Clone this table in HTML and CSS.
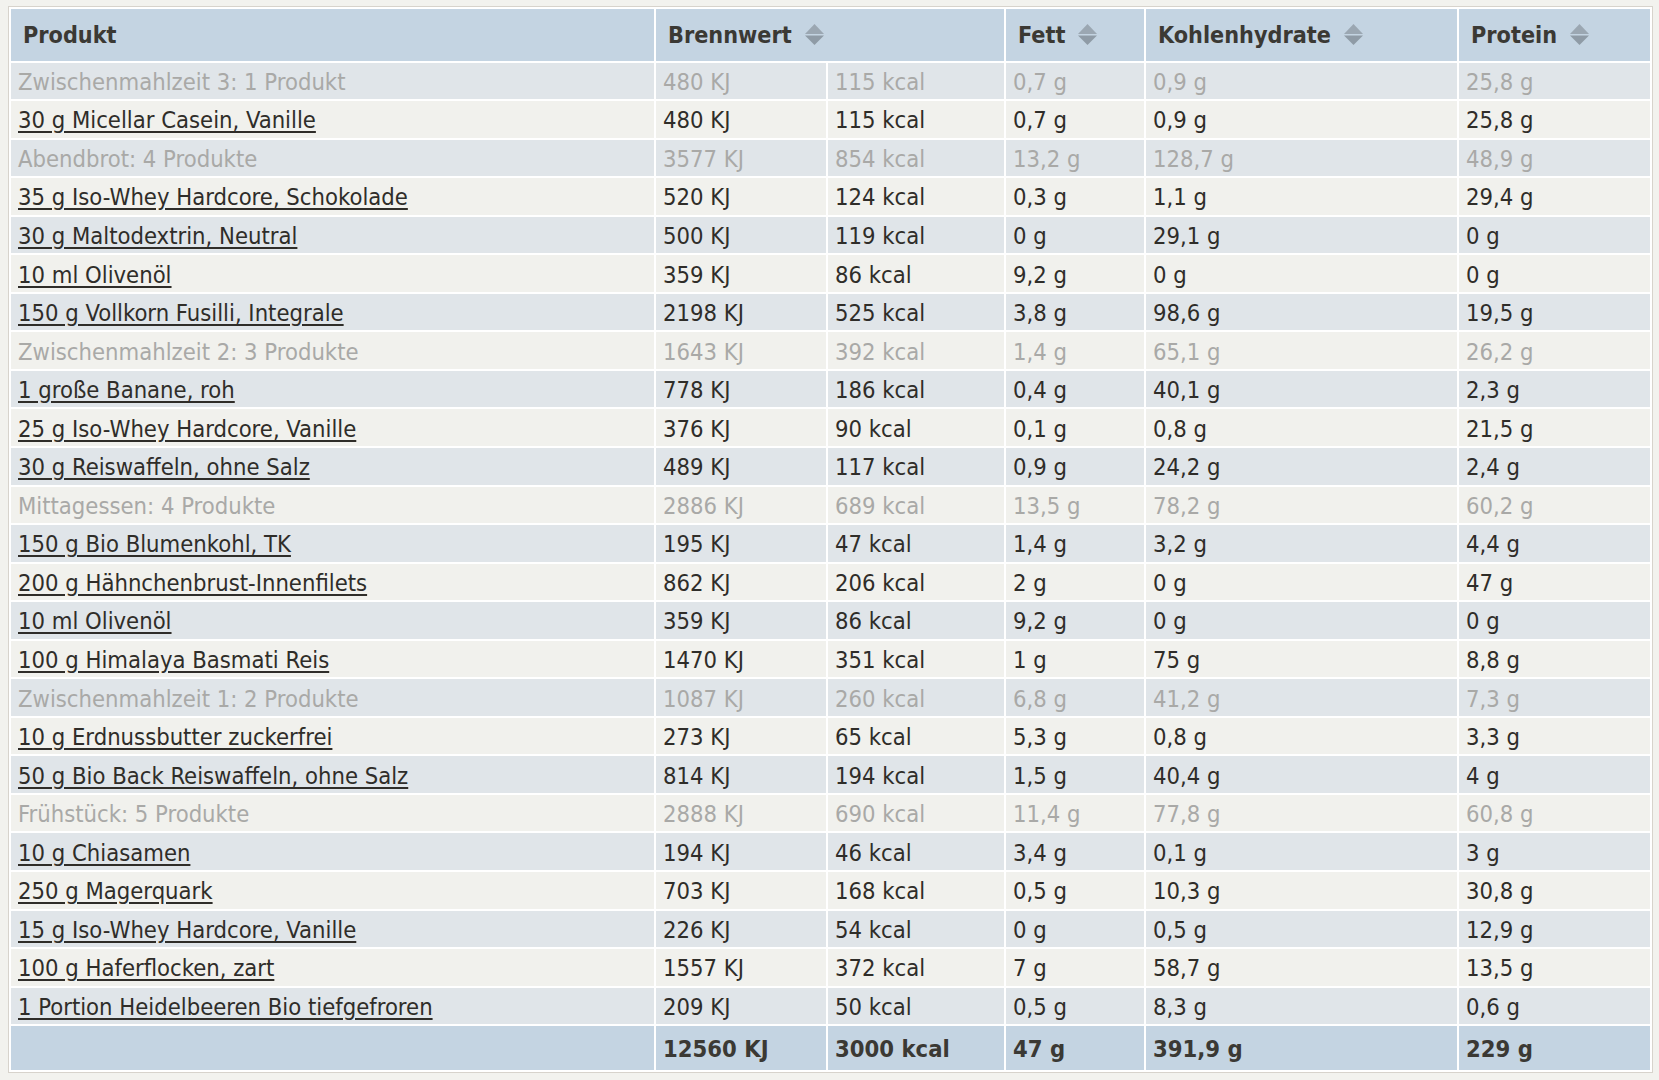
FILE: index.html
```html
<!DOCTYPE html>
<html lang="de">
<head>
<meta charset="utf-8">
<title>Tagesübersicht</title>
<link rel="stylesheet" href="styles.css">
</head>
<body>
<div class="wrap">
<table class="nutri">
<colgroup>
<col class="c-prod"><col class="c-kj"><col class="c-kcal"><col class="c-fett"><col class="c-kh"><col class="c-prot">
</colgroup>
<thead>
<tr>
<th>Produkt</th>
<th colspan="2"><span class="hd">Brennwert<svg class="sort" viewBox="0 0 19 21" width="19" height="21"><polygon points="0,10 9.5,0 19,10" fill="#9ba7b2"/><polygon points="0,11.5 19,11.5 9.5,21" fill="#8f9ba6"/></svg></span></th>
<th><span class="hd">Fett<svg class="sort" viewBox="0 0 19 21" width="19" height="21"><polygon points="0,10 9.5,0 19,10" fill="#9ba7b2"/><polygon points="0,11.5 19,11.5 9.5,21" fill="#8f9ba6"/></svg></span></th>
<th><span class="hd">Kohlenhydrate<svg class="sort" viewBox="0 0 19 21" width="19" height="21"><polygon points="0,10 9.5,0 19,10" fill="#9ba7b2"/><polygon points="0,11.5 19,11.5 9.5,21" fill="#8f9ba6"/></svg></span></th>
<th><span class="hd">Protein<svg class="sort" viewBox="0 0 19 21" width="19" height="21"><polygon points="0,10 9.5,0 19,10" fill="#9ba7b2"/><polygon points="0,11.5 19,11.5 9.5,21" fill="#8f9ba6"/></svg></span></th>
</tr>
</thead>
<tbody>
<tr class="grp"><td>Zwischenmahlzeit 3: 1 Produkt</td><td>480 KJ</td><td>115 kcal</td><td>0,7 g</td><td>0,9 g</td><td>25,8 g</td></tr>
<tr><td><a href="#">30 g Micellar Casein, Vanille</a></td><td>480 KJ</td><td>115 kcal</td><td>0,7 g</td><td>0,9 g</td><td>25,8 g</td></tr>
<tr class="grp"><td>Abendbrot: 4 Produkte</td><td>3577 KJ</td><td>854 kcal</td><td>13,2 g</td><td>128,7 g</td><td>48,9 g</td></tr>
<tr><td><a href="#">35 g Iso-Whey Hardcore, Schokolade</a></td><td>520 KJ</td><td>124 kcal</td><td>0,3 g</td><td>1,1 g</td><td>29,4 g</td></tr>
<tr><td><a href="#">30 g Maltodextrin, Neutral</a></td><td>500 KJ</td><td>119 kcal</td><td>0 g</td><td>29,1 g</td><td>0 g</td></tr>
<tr><td><a href="#">10 ml Olivenöl</a></td><td>359 KJ</td><td>86 kcal</td><td>9,2 g</td><td>0 g</td><td>0 g</td></tr>
<tr><td><a href="#">150 g Vollkorn Fusilli, Integrale</a></td><td>2198 KJ</td><td>525 kcal</td><td>3,8 g</td><td>98,6 g</td><td>19,5 g</td></tr>
<tr class="grp"><td>Zwischenmahlzeit 2: 3 Produkte</td><td>1643 KJ</td><td>392 kcal</td><td>1,4 g</td><td>65,1 g</td><td>26,2 g</td></tr>
<tr><td><a href="#">1 große Banane, roh</a></td><td>778 KJ</td><td>186 kcal</td><td>0,4 g</td><td>40,1 g</td><td>2,3 g</td></tr>
<tr><td><a href="#">25 g Iso-Whey Hardcore, Vanille</a></td><td>376 KJ</td><td>90 kcal</td><td>0,1 g</td><td>0,8 g</td><td>21,5 g</td></tr>
<tr><td><a href="#">30 g Reiswaffeln, ohne Salz</a></td><td>489 KJ</td><td>117 kcal</td><td>0,9 g</td><td>24,2 g</td><td>2,4 g</td></tr>
<tr class="grp"><td>Mittagessen: 4 Produkte</td><td>2886 KJ</td><td>689 kcal</td><td>13,5 g</td><td>78,2 g</td><td>60,2 g</td></tr>
<tr><td><a href="#">150 g Bio Blumenkohl, TK</a></td><td>195 KJ</td><td>47 kcal</td><td>1,4 g</td><td>3,2 g</td><td>4,4 g</td></tr>
<tr><td><a href="#">200 g Hähnchenbrust-Innenfilets</a></td><td>862 KJ</td><td>206 kcal</td><td>2 g</td><td>0 g</td><td>47 g</td></tr>
<tr><td><a href="#">10 ml Olivenöl</a></td><td>359 KJ</td><td>86 kcal</td><td>9,2 g</td><td>0 g</td><td>0 g</td></tr>
<tr><td><a href="#">100 g Himalaya Basmati Reis</a></td><td>1470 KJ</td><td>351 kcal</td><td>1 g</td><td>75 g</td><td>8,8 g</td></tr>
<tr class="grp"><td>Zwischenmahlzeit 1: 2 Produkte</td><td>1087 KJ</td><td>260 kcal</td><td>6,8 g</td><td>41,2 g</td><td>7,3 g</td></tr>
<tr><td><a href="#">10 g Erdnussbutter zuckerfrei</a></td><td>273 KJ</td><td>65 kcal</td><td>5,3 g</td><td>0,8 g</td><td>3,3 g</td></tr>
<tr><td><a href="#">50 g Bio Back Reiswaffeln, ohne Salz</a></td><td>814 KJ</td><td>194 kcal</td><td>1,5 g</td><td>40,4 g</td><td>4 g</td></tr>
<tr class="grp"><td>Frühstück: 5 Produkte</td><td>2888 KJ</td><td>690 kcal</td><td>11,4 g</td><td>77,8 g</td><td>60,8 g</td></tr>
<tr><td><a href="#">10 g Chiasamen</a></td><td>194 KJ</td><td>46 kcal</td><td>3,4 g</td><td>0,1 g</td><td>3 g</td></tr>
<tr><td><a href="#">250 g Magerquark</a></td><td>703 KJ</td><td>168 kcal</td><td>0,5 g</td><td>10,3 g</td><td>30,8 g</td></tr>
<tr><td><a href="#">15 g Iso-Whey Hardcore, Vanille</a></td><td>226 KJ</td><td>54 kcal</td><td>0 g</td><td>0,5 g</td><td>12,9 g</td></tr>
<tr><td><a href="#">100 g Haferflocken, zart</a></td><td>1557 KJ</td><td>372 kcal</td><td>7 g</td><td>58,7 g</td><td>13,5 g</td></tr>
<tr><td><a href="#">1 Portion Heidelbeeren Bio tiefgefroren</a></td><td>209 KJ</td><td>50 kcal</td><td>0,5 g</td><td>8,3 g</td><td>0,6 g</td></tr>
</tbody>
<tfoot>
<tr><td></td><td>12560 KJ</td><td>3000 kcal</td><td>47 g</td><td>391,9 g</td><td>229 g</td></tr>
</tfoot>
</table>
</div>
</body>
</html>
```

FILE: styles.css
```css
html, body {
  background: #f2f2ee;
}
body {
  margin: 6px 6px 6px 8px;
  font-family: "DejaVu Sans Condensed", "DejaVu Sans", sans-serif;
  font-stretch: semi-condensed;
  font-size: 23.6px;
  color: #2f2d29;
}
.wrap {
  width: 1643px;
  border: 1px solid #d7d3cc;
  background: #ffffff;
}
.nutri {
  width: 1643px;
  table-layout: fixed;
  border-collapse: separate;
  border-spacing: 2px;
  background: #ffffff;
}
.c-prod { width: 643px; }
.c-kj { width: 170px; }
.c-kcal { width: 176px; }
.c-fett { width: 138px; }
.c-kh { width: 311px; }
.c-prot { width: 191px; }

.nutri th {
  background: #c4d4e2;
  height: 51.5px;
  padding: 0 12px;
  text-align: left;
  font-weight: bold;
  font-size: 23.2px;
  color: #3b3934;
  vertical-align: middle;
  white-space: nowrap;
}
.hd {
  display: inline-flex;
  align-items: center;
  gap: 13px;
}
.sort {
  display: block;
}
.nutri td {
  box-sizing: border-box;
  height: 36.56px;
  padding: 2px 7px 0 7px;
  line-height: 28px;
  vertical-align: middle;
  white-space: nowrap;
  overflow: hidden;
}
.nutri tbody tr:nth-child(odd) td {
  background: #e0e5e9;
}
.nutri tbody tr:nth-child(even) td {
  background: #f1f1ed;
}
.nutri tbody tr.grp td {
  color: #a9a9a7;
}
.nutri a {
  color: #2f2d29;
  text-decoration: underline;
  text-underline-offset: 3px;
}
.nutri tfoot td {
  background: #c4d4e2;
  height: 44px;
  font-weight: bold;
  color: #3b3934;
}
```
